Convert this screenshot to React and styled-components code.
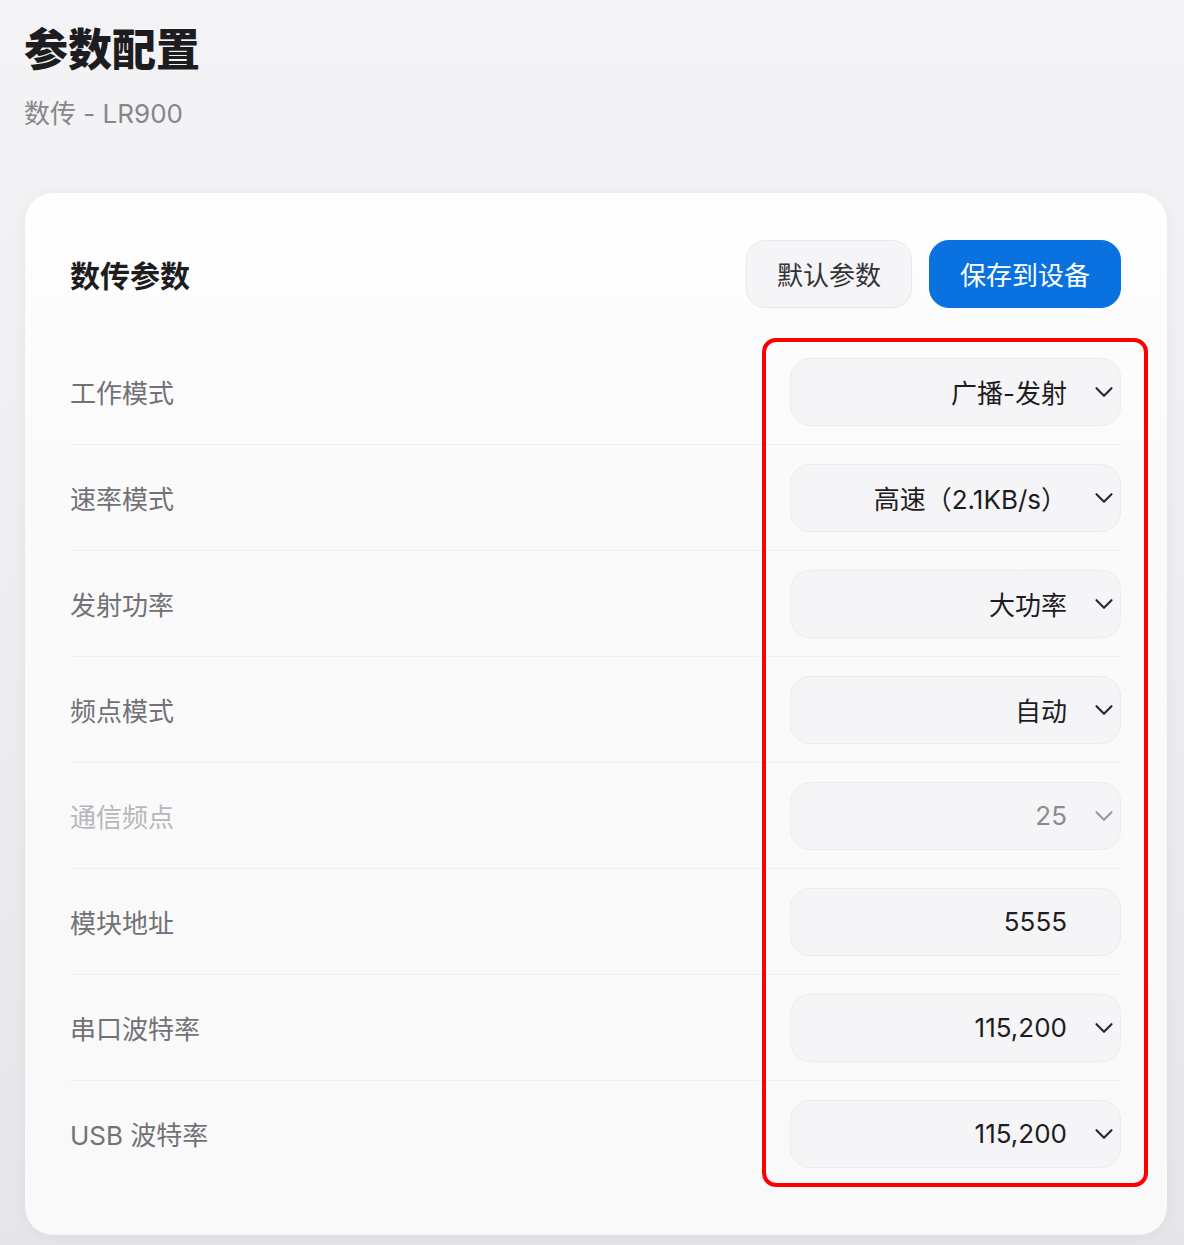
import styled, { createGlobalStyle } from "styled-components";
import { ChevronDown } from "lucide-react";

const GlobalStyle = createGlobalStyle`
	* {
		box-sizing: border-box;
	}
	body {
		margin: 0;
		font-family: Inter, "Noto Sans CJK SC", sans-serif;
		background: linear-gradient(180deg, #f4f4f6 0%, #ececef 60%, #e6e6ea 100%);
		color: #1d1d1f;
	}
`;

const Page = styled.div`
	padding: 24px 17px 10px 25px;
	min-height: 1245px;
`;

const Title = styled.h1`
	margin: 0 0 0 -1px;
	font-size: 44px;
	line-height: 52px;
	font-weight: 900;
	color: #1d1d1f;
`;

const Subtitle = styled.p`
	margin: 22px 0 0 -1px;
	font-size: 26px;
	line-height: 32px;
	color: #86868b;
`;

const Card = styled.section`
	margin-top: 63px;
	height: 1042px;
	padding: 46px 46px 0 45px;
	background: linear-gradient(180deg, #fefefe 0%, #fafafa 30%, #f9f9fa 100%);
	border-radius: 28px;
	box-shadow: 0 2px 14px rgba(0, 0, 0, 0.05);
`;

const CardHeader = styled.div`
	display: flex;
	align-items: center;
	justify-content: space-between;
	height: 69px;
`;

const CardTitle = styled.h2`
	margin: 0;
	font-size: 30px;
	font-weight: 700;
	color: #1d1d1f;
`;

const Actions = styled.div`
	display: flex;
	gap: 17px;
`;

const Button = styled.button`
	height: 68px;
	padding: 0 30px;
	border-radius: 20px;
	font-family: inherit;
	font-size: 26px;
	cursor: pointer;
	border: 1px solid ${(p) => (p.$primary ? "#0a72e0" : "#e9e9eb")};
	background: ${(p) => (p.$primary ? "#0a72e0" : "#f5f5f7")};
	color: ${(p) => (p.$primary ? "#ffffff" : "#333336")};
	box-shadow: ${(p) => (p.$primary ? "none" : "0 1px 2px rgba(0,0,0,0.03)")};
`;

const List = styled.div`
	position: relative;
	margin-top: 31px;
`;

const Row = styled.div`
	display: flex;
	align-items: center;
	justify-content: space-between;
	height: 106px;
	border-bottom: 1px solid ${(p) => (p.$last ? "transparent" : "#f0f0f2")};
`;

const Label = styled.span`
	font-size: 26px;
	color: ${(p) => (p.$disabled ? "#b7b7bb" : "#717176")};
`;

const Field = styled.div`
	width: 331px;
	height: 68px;
	display: flex;
	align-items: center;
	justify-content: flex-end;
	gap: 22px;
	padding-right: 1px;
	border-radius: 20px;
	border: 1px solid #ececee;
	background: #f5f5f7;
	font-size: 26px;
	color: ${(p) => (p.$disabled ? "#8b8b90" : "#1d1d1f")};

	svg {
		color: ${(p) => (p.$disabled ? "#9a9a9f" : "#2a2a2d")};
		flex-shrink: 0;
	}
`;

const TextInput = styled.input`
	width: 331px;
	height: 68px;
	padding: 0 53px 0 20px;
	border-radius: 20px;
	border: 1px solid #ececee;
	background: #f5f5f7;
	font-family: inherit;
	font-size: 26px;
	color: #1d1d1f;
	text-align: right;
	outline: none;
`;

const Highlight = styled.div`
	position: absolute;
	top: -1px;
	right: -27px;
	width: 386px;
	height: 849px;
	border: 4px solid #ff0000;
	border-radius: 14px;
	pointer-events: none;
`;

const rows = [
	{ label: "工作模式", value: "广播-发射" },
	{ label: "速率模式", value: "高速（2.1KB/s）" },
	{ label: "发射功率", value: "大功率" },
	{ label: "频点模式", value: "自动" },
	{ label: "通信频点", value: "25", disabled: true },
	{ label: "模块地址", value: "5555", input: true },
	{ label: "串口波特率", value: "115,200" },
	{ label: "USB 波特率", value: "115,200" },
];

export default function App() {
	return (
		<>
			<GlobalStyle />
			<Page>
				<Title>参数配置</Title>
				<Subtitle>数传 - LR900</Subtitle>
				<Card>
					<CardHeader>
						<CardTitle>数传参数</CardTitle>
						<Actions>
							<Button>默认参数</Button>
							<Button $primary>保存到设备</Button>
						</Actions>
					</CardHeader>
					<List>
						{rows.map((row, i) => (
							<Row key={row.label} $last={i === rows.length - 1}>
								<Label $disabled={row.disabled}>{row.label}</Label>
								{row.input ? (
									<TextInput defaultValue={row.value} />
								) : (
									<Field $disabled={row.disabled}>
										<span>{row.value}</span>
										<ChevronDown size={30} strokeWidth={1.7} />
									</Field>
								)}
							</Row>
						))}
						<Highlight />
					</List>
				</Card>
			</Page>
		</>
	);
}
